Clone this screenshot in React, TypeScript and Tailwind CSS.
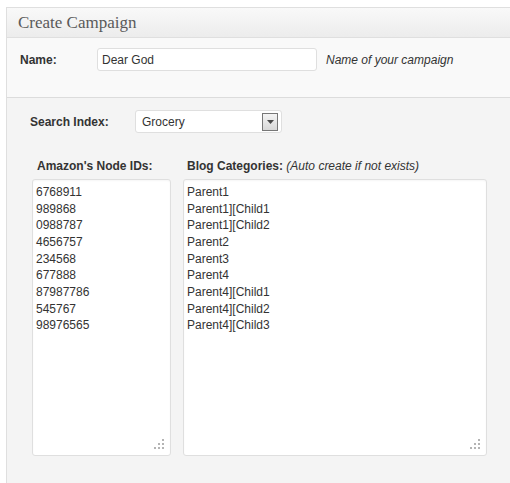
import React from "react";

const nodeIds = [
  "6768911",
  "989868",
  "0988787",
  "4656757",
  "234568",
  "677888",
  "87987786",
  "545767",
  "98976565",
];

const categories = [
  "Parent1",
  "Parent1][Child1",
  "Parent1][Child2",
  "Parent2",
  "Parent3",
  "Parent4",
  "Parent4][Child1",
  "Parent4][Child2",
  "Parent4][Child3",
];

function Grip() {
  return (
    <svg
      className="absolute right-[6px] bottom-[6px]"
      width="10"
      height="10"
      viewBox="0 0 10 10"
    >
      <g fill="#b4b4b4">
        <rect x="8" y="0" width="2" height="2" />
        <rect x="4" y="4" width="2" height="2" />
        <rect x="8" y="4" width="2" height="2" />
        <rect x="0" y="8" width="2" height="2" />
        <rect x="4" y="8" width="2" height="2" />
        <rect x="8" y="8" width="2" height="2" />
      </g>
    </svg>
  );
}

function TextBox({ lines, width }: { lines: string[]; width: string }) {
  return (
    <div
      className={`relative ${width} h-[277px] bg-white border border-[#dfdfdf] rounded-[3px] shadow-[inset_0_1px_2px_rgba(0,0,0,0.04)] pl-[3px] pt-[4px] text-[12px] leading-[16.66px] text-[#333]`}
    >
      {lines.map((l) => (
        <div key={l}>{l}</div>
      ))}
      <Grip />
    </div>
  );
}

export default function App() {
  return (
    <div
      className="w-[510px] h-[483px] overflow-hidden bg-white pl-[6px] pt-[7px]"
      style={{ fontFamily: '"Liberation Sans", Arial, sans-serif' }}
    >
      <div className="w-[504px] h-[476px] flex flex-col border-l border-t border-[#dfdfdf]">
        <div className="h-[30px] shrink-0 flex items-center pl-[11px] border-b border-[#dfdfdf] bg-gradient-to-b from-[#f9f9f9] to-[#ececec]">
          <span
            className="text-[17px] text-[#5a5a5a]"
            style={{ fontFamily: '"Liberation Serif", "DejaVu Serif", serif' }}
          >
            Create Campaign
          </span>
        </div>

        <div className="h-[60px] shrink-0 bg-[#f9f9f9] border-b border-[#dcdcdc] flex items-start pt-[10px] pl-[13px] text-[12px] text-[#333]">
          <div className="w-[77px] h-[23px] flex items-center font-bold">Name:</div>
          <div className="w-[220px] h-[23px] bg-white border border-[#dfdfdf] rounded-[3px] flex items-center pl-[4px]">
            Dear God
          </div>
          <div className="h-[23px] flex items-center pl-[9px] italic">
            Name of your campaign
          </div>
        </div>

        <div className="flex-1 bg-[#f4f4f4] text-[12px] text-[#333]">
          <div className="flex items-center pt-[12px] pl-[23px]">
            <div className="w-[105px] font-bold">Search Index:</div>
            <div className="w-[147px] h-[23px] bg-white border border-[#dfdfdf] rounded-[3px] flex items-center justify-between pl-[6px] pr-[3px]">
              <span>Grocery</span>
              <div className="w-[16px] h-[18px] border border-[#777] bg-gradient-to-b from-[#f4f4f4] to-[#d8d8d8] flex items-center justify-center">
                <svg width="7" height="4" viewBox="0 0 7 4">
                  <path d="M0 0 H7 L3.5 4 Z" fill="#4a4a4a" />
                </svg>
              </div>
            </div>
          </div>

          <div className="flex gap-[12px] pl-[25px] pt-[24px]">
            <div className="flex flex-col">
              <div className="pl-[5px] h-[22px] font-bold">Amazon's Node IDs:</div>
              <TextBox lines={nodeIds} width="w-[139px]" />
            </div>
            <div className="flex flex-col">
              <div className="pl-[4px] h-[22px]">
                <span className="font-bold">Blog Categories:</span>{" "}
                <span className="italic">(Auto create if not exists)</span>
              </div>
              <TextBox lines={categories} width="w-[304px]" />
            </div>
          </div>
        </div>
      </div>
    </div>
  );
}
